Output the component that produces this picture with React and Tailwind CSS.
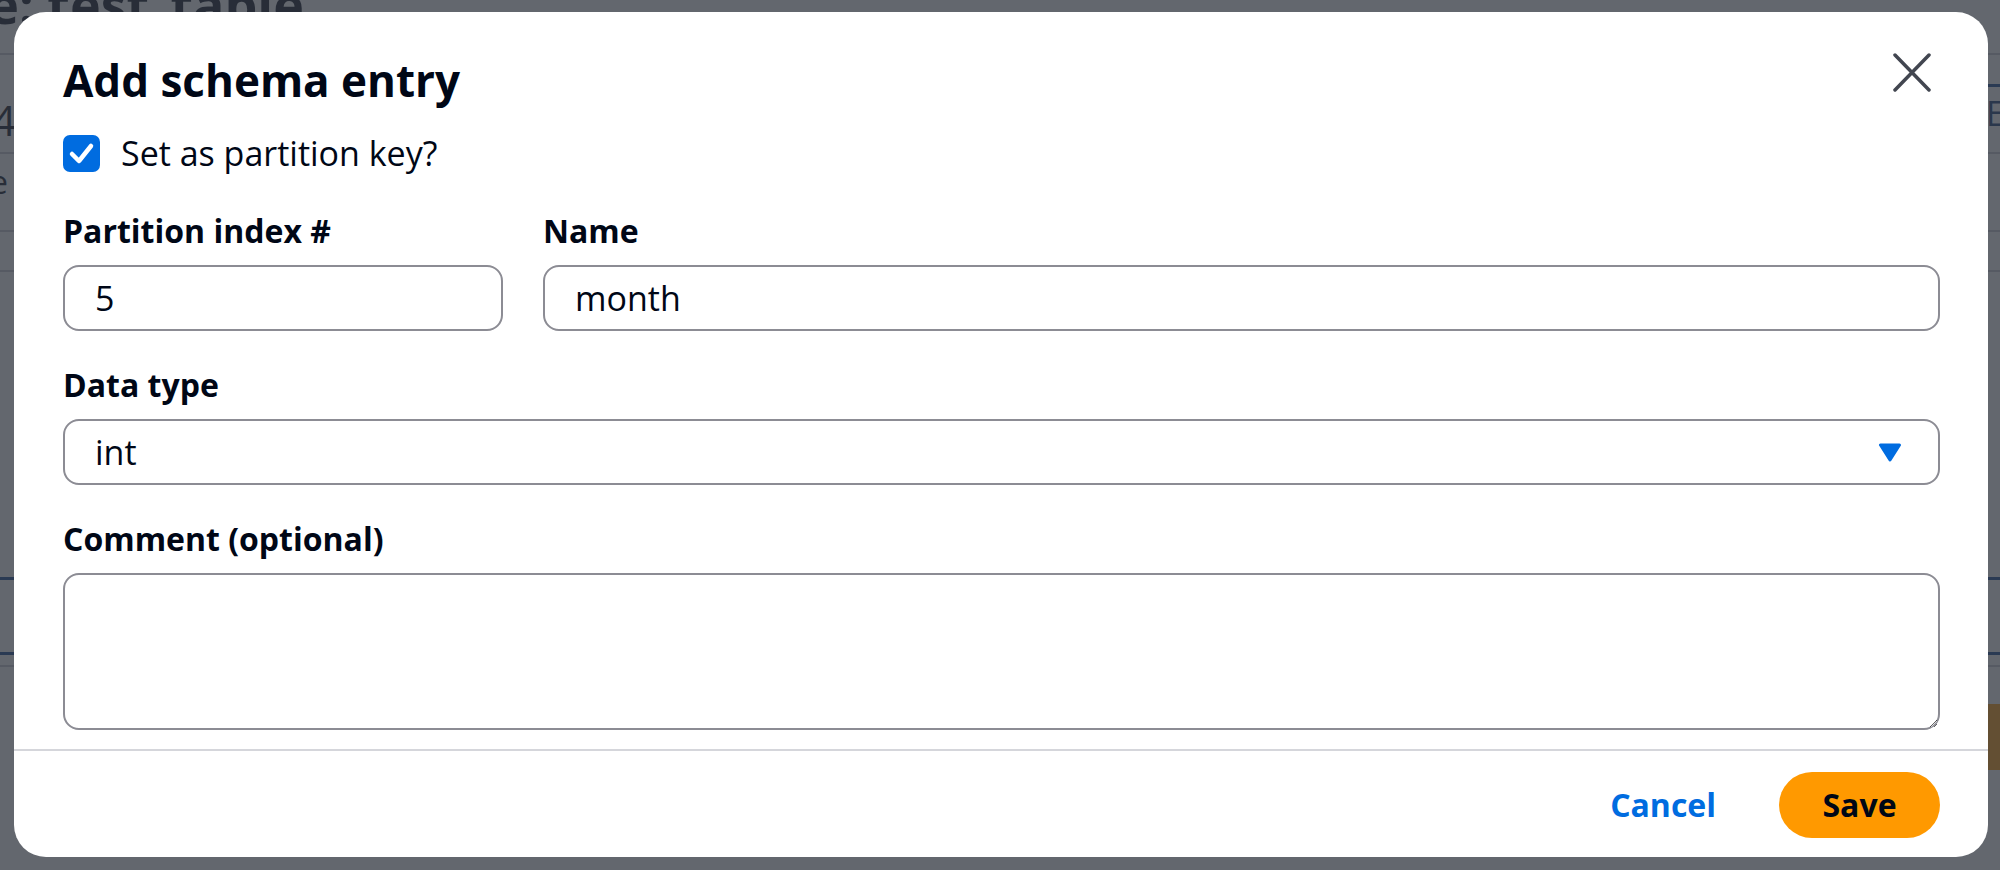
import React from "react";

function CloseIcon() {
  return (
    <svg width="38" height="39" viewBox="0 0 38 39" fill="none">
      <path d="M2 2 L36 37 M36 2 L2 37" stroke="#424650" strokeWidth="3.5" strokeLinecap="round" />
    </svg>
  );
}

function CheckIcon() {
  return (
    <svg width="37" height="37" viewBox="0 0 37 37" fill="none">
      <polyline points="9,19 16,26 28,11" stroke="#ffffff" strokeWidth="4.5" strokeLinecap="round" strokeLinejoin="round" />
    </svg>
  );
}

function CaretDown() {
  return (
    <svg width="24" height="19" viewBox="0 0 24 19">
      <path d="M2.5 2 H21.5 L12 17 Z" fill="#006ce0" stroke="#006ce0" strokeWidth="3" strokeLinejoin="round" />
    </svg>
  );
}

function Label({ children }) {
  return <div className="text-[32px] leading-[36px] font-bold text-[#000716]">{children}</div>;
}

export default function App() {
  return (
    <div className="relative w-[2000px] h-[870px] overflow-hidden bg-white font-['Open_Sans','Noto_Sans',sans-serif] text-[#000716]">
      {/* page behind the modal */}
      <div className="w-full">
        <div className="-mt-[24px] -ml-[122px] text-[52px] leading-[56px] font-bold text-[#000716] whitespace-nowrap">
          Table: test_table
        </div>
        <div className="mt-[21px] h-[2px] bg-[#c6c6cd]" />
        <div className="flex justify-between mt-[45px]">
          <div className="-ml-[8px] text-[42px] leading-[40px] text-[#000716]">4</div>
          <div className="flex flex-col">
            <div className="h-[3px] w-[14px] bg-[#0b3f8c] -mt-[16px]" />
            <div className="text-[34px] leading-[40px] text-[#0b2f6b] mr-[-18px] mt-[6px]">E</div>
          </div>
        </div>
        <div className="mt-[12px] h-[2px] bg-[#c6c6cd]" />
        <div className="mt-[8px] h-[40px] -ml-[10px] text-[32px] leading-[40px] text-[#000716]">e</div>
        <div className="mt-[28px] h-[2px] bg-[#c6c6cd]" />
        <div className="mt-[38px] h-[2px] bg-[#c6c6cd]" />
        <div className="mt-[305px] h-[3px] bg-[#0b3f8c]" />
        <div className="mt-[72px] h-[3px] bg-[#0b3f8c]" />
        <div className="mt-[10px] h-[2px] bg-[#c6c6cd]" />
        <div className="flex justify-end mt-[37px]">
          <div className="w-[30px] h-[66px] bg-[#ff9900] rounded-l-[16px]" />
        </div>
      </div>

      {/* overlay */}
      <div className="absolute inset-0 bg-[rgba(52,57,67,0.77)]" />

      {/* modal */}
      <div className="absolute inset-0 pt-[12px] pl-[14px] pr-[12px]">
        <div className="bg-white rounded-[32px] h-[845px] flex flex-col">
          <div className="flex justify-between items-start pt-[41px] pl-[49px] pr-[57px]">
            <h2 className="mt-[1px] text-[44px] leading-[53px] font-bold text-[#000716]">Add schema entry</h2>
            <button className="w-[38px] h-[39px] flex items-center justify-center">
              <CloseIcon />
            </button>
          </div>

          <div className="pl-[49px] pr-[48px]">
            <div className="mt-[27px] flex items-center gap-[21px]">
              <div className="w-[37px] h-[37px] rounded-[7px] bg-[#006ce0] flex items-center justify-center">
                <CheckIcon />
              </div>
              <span className="text-[34px] leading-[38px] text-[#000716]">Set as partition key?</span>
            </div>

            <div className="mt-[41px] flex gap-[40px]">
              <div className="w-[440px] flex flex-col gap-[16px]">
                <Label>Partition index #</Label>
                <input
                  readOnly
                  value="5"
                  className="h-[66px] w-full border-2 border-[#8c8c94] rounded-[16px] px-[30px] text-[34px] text-[#000716] bg-white outline-none"
                />
              </div>
              <div className="flex-1 flex flex-col gap-[16px]">
                <Label>Name</Label>
                <input
                  readOnly
                  value="month"
                  className="h-[66px] w-full border-2 border-[#8c8c94] rounded-[16px] px-[30px] text-[34px] text-[#000716] bg-white outline-none"
                />
              </div>
            </div>

            <div className="mt-[36px] flex flex-col gap-[16px]">
              <Label>Data type</Label>
              <div className="h-[66px] border-2 border-[#8c8c94] rounded-[16px] pl-[30px] pr-[36px] flex items-center justify-between">
                <span className="text-[34px] text-[#000716]">int</span>
                <CaretDown />
              </div>
            </div>

            <div className="mt-[36px] flex flex-col gap-[16px]">
              <Label>Comment (optional)</Label>
              <textarea
                readOnly
                className="block h-[157px] w-full border-2 border-[#8c8c94] rounded-[16px] px-[30px] py-[12px] text-[34px] bg-white outline-none"
              />
            </div>
          </div>

          <div className="mt-[19px] h-[2px] bg-[#d5d6db]" />

          <div className="flex justify-end items-center gap-[32px] pt-[21px] pr-[48px]">
            <button className="h-[66px] px-[31px] text-[32px] font-bold text-[#006ce0]">Cancel</button>
            <button className="h-[66px] w-[161px] rounded-full bg-[#ff9900] text-[32px] font-bold text-[#000716]">
              Save
            </button>
          </div>
        </div>
      </div>
    </div>
  );
}
